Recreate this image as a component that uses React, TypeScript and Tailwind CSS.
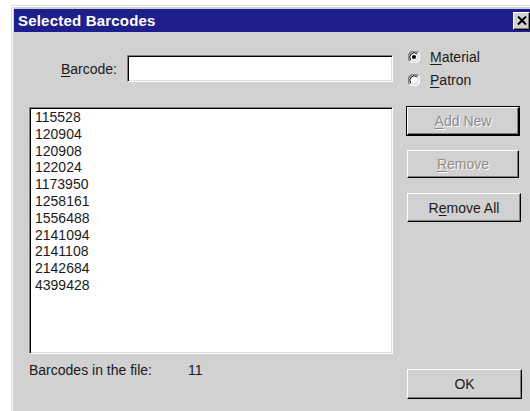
const barcodes = [
  "115528",
  "120904",
  "120908",
  "122024",
  "1173950",
  "1258161",
  "1556488",
  "2141094",
  "2141108",
  "2142684",
  "4399428",
];

const font = "font-['Liberation_Sans',Arial,sans-serif]";

function Radio({ checked }: { checked?: boolean }) {
  return (
    <svg width="12" height="12" viewBox="0 0 12 12" className="shrink-0">
      {/* sunken circle: dark upper-left, light lower-right */}
      <path d="M10.24 1.76 A6 6 0 0 0 1.76 10.24" fill="none" stroke="#808080" strokeWidth="1.4" />
      <path d="M1.76 10.24 A6 6 0 0 0 10.24 1.76" fill="none" stroke="#ffffff" strokeWidth="1.4" />
      <circle cx="6" cy="6" r="4.4" fill="#ffffff" />
      <path d="M9.1 2.9 A4.4 4.4 0 0 0 2.9 9.1" fill="none" stroke="#000000" strokeWidth="1" />
      <path d="M2.9 9.1 A4.4 4.4 0 0 0 9.1 2.9" fill="none" stroke="#dfdfdf" strokeWidth="1" />
      {checked && <circle cx="6" cy="6" r="2.1" fill="#000000" />}
    </svg>
  );
}

function Button({
  children,
  disabled,
  isDefault,
  className = "",
}: {
  children: React.ReactNode;
  disabled?: boolean;
  isDefault?: boolean;
  className?: string;
}) {
  return (
    <div
      className={`flex items-center justify-center bg-[#d1d1d1] border border-t-white border-l-white border-r-black border-b-black shadow-[inset_-1px_-1px_0_#808080] text-[14px] leading-[16px] ${
        disabled ? "text-[#8c8c8c] [text-shadow:1px_1px_0_#ffffff]" : "text-[#1a1a1a]"
      } ${isDefault ? "outline-1 outline-black" : ""} ${className}`}
    >
      {children}
    </div>
  );
}

export default function App() {
  return (
    <div className={`w-[530px] h-[411px] bg-white pt-[5px] pl-[11px] overflow-hidden ${font}`}>
      <div className="h-full border-l border-t border-[#dcdcdc] bg-[#d1d1d1] pl-[2px] pt-[3px] shadow-[inset_1px_1px_0_#ffffff]">
        {/* title bar */}
        <div className="h-[23px] bg-[#1e1e8c] flex items-center justify-between pl-[4px]">
          <span className="text-white font-bold text-[15px] leading-[16px] tracking-[0.2px]">
            Selected Barcodes
          </span>
          <div className="w-[17px] h-[18px] bg-[#d1d1d1] border border-t-white border-l-white border-r-black border-b-black shadow-[inset_-1px_-1px_0_#808080] flex items-center justify-center">
            <svg width="10" height="9" viewBox="0 0 10 9">
              <path d="M1 0.5 L9 8.5 M9 0.5 L1 8.5" stroke="#000" strokeWidth="2" />
            </svg>
          </div>
        </div>

        <div className="flex pl-[15px] text-[#1a1a1a]">
          {/* left column */}
          <div className="w-[364px] flex flex-col">
            <div className="mt-[23px] flex items-center justify-end">
              <span className="text-[14px] leading-[16px]">
                <span className="underline underline-offset-2">B</span>arcode:
              </span>
              <div className="ml-[10px] w-[266px] h-[27px] bg-white border border-t-[#808080] border-l-[#808080] border-r-white border-b-white shadow-[inset_1px_1px_0_#000,inset_-1px_-1px_0_#dfdfdf]" />
            </div>

            <div className="mt-[25px] h-[247px] bg-white border border-t-[#808080] border-l-[#808080] border-r-white border-b-white shadow-[inset_1px_1px_0_#000,inset_-1px_-1px_0_#dfdfdf] pl-[5px] pt-[1px]">
              {barcodes.map((code) => (
                <div key={code} className="text-[14px] leading-[16.8px]">
                  {code}
                </div>
              ))}
            </div>

            <div className="mt-[8px] flex text-[14px] leading-[16px]">
              <span className="w-[159px]">Barcodes in the file:</span>
              <span>11</span>
            </div>
          </div>

          {/* right column */}
          <div className="ml-[14px] flex flex-col">
            <div className="mt-[13px] flex flex-col pl-[1px] text-[14px] leading-[16px]">
              <div className="h-[23px] flex items-center gap-[10px]">
                <Radio checked />
                <span>
                  <span className="underline underline-offset-2">M</span>aterial
                </span>
              </div>
              <div className="h-[23px] flex items-center gap-[10px]">
                <Radio />
                <span>
                  <span className="underline underline-offset-2">P</span>atron
                </span>
              </div>
            </div>

            <div className="mt-[16px] flex flex-col gap-[15px]">
              <Button disabled isDefault className="w-[112px] h-[28px]">
                <span>
                  <span className="underline underline-offset-2">A</span>dd New
                </span>
              </Button>
              <Button disabled className="w-[112px] h-[28px]">
                <span>
                  <span className="underline underline-offset-2">R</span>emove
                </span>
              </Button>
              <Button className="w-[114px] h-[29px]">
                <span>
                  R<span className="underline underline-offset-2">e</span>move All
                </span>
              </Button>
            </div>

            <Button className="mt-[147px] w-[115px] h-[30px]">OK</Button>
          </div>
        </div>
      </div>
    </div>
  );
}
